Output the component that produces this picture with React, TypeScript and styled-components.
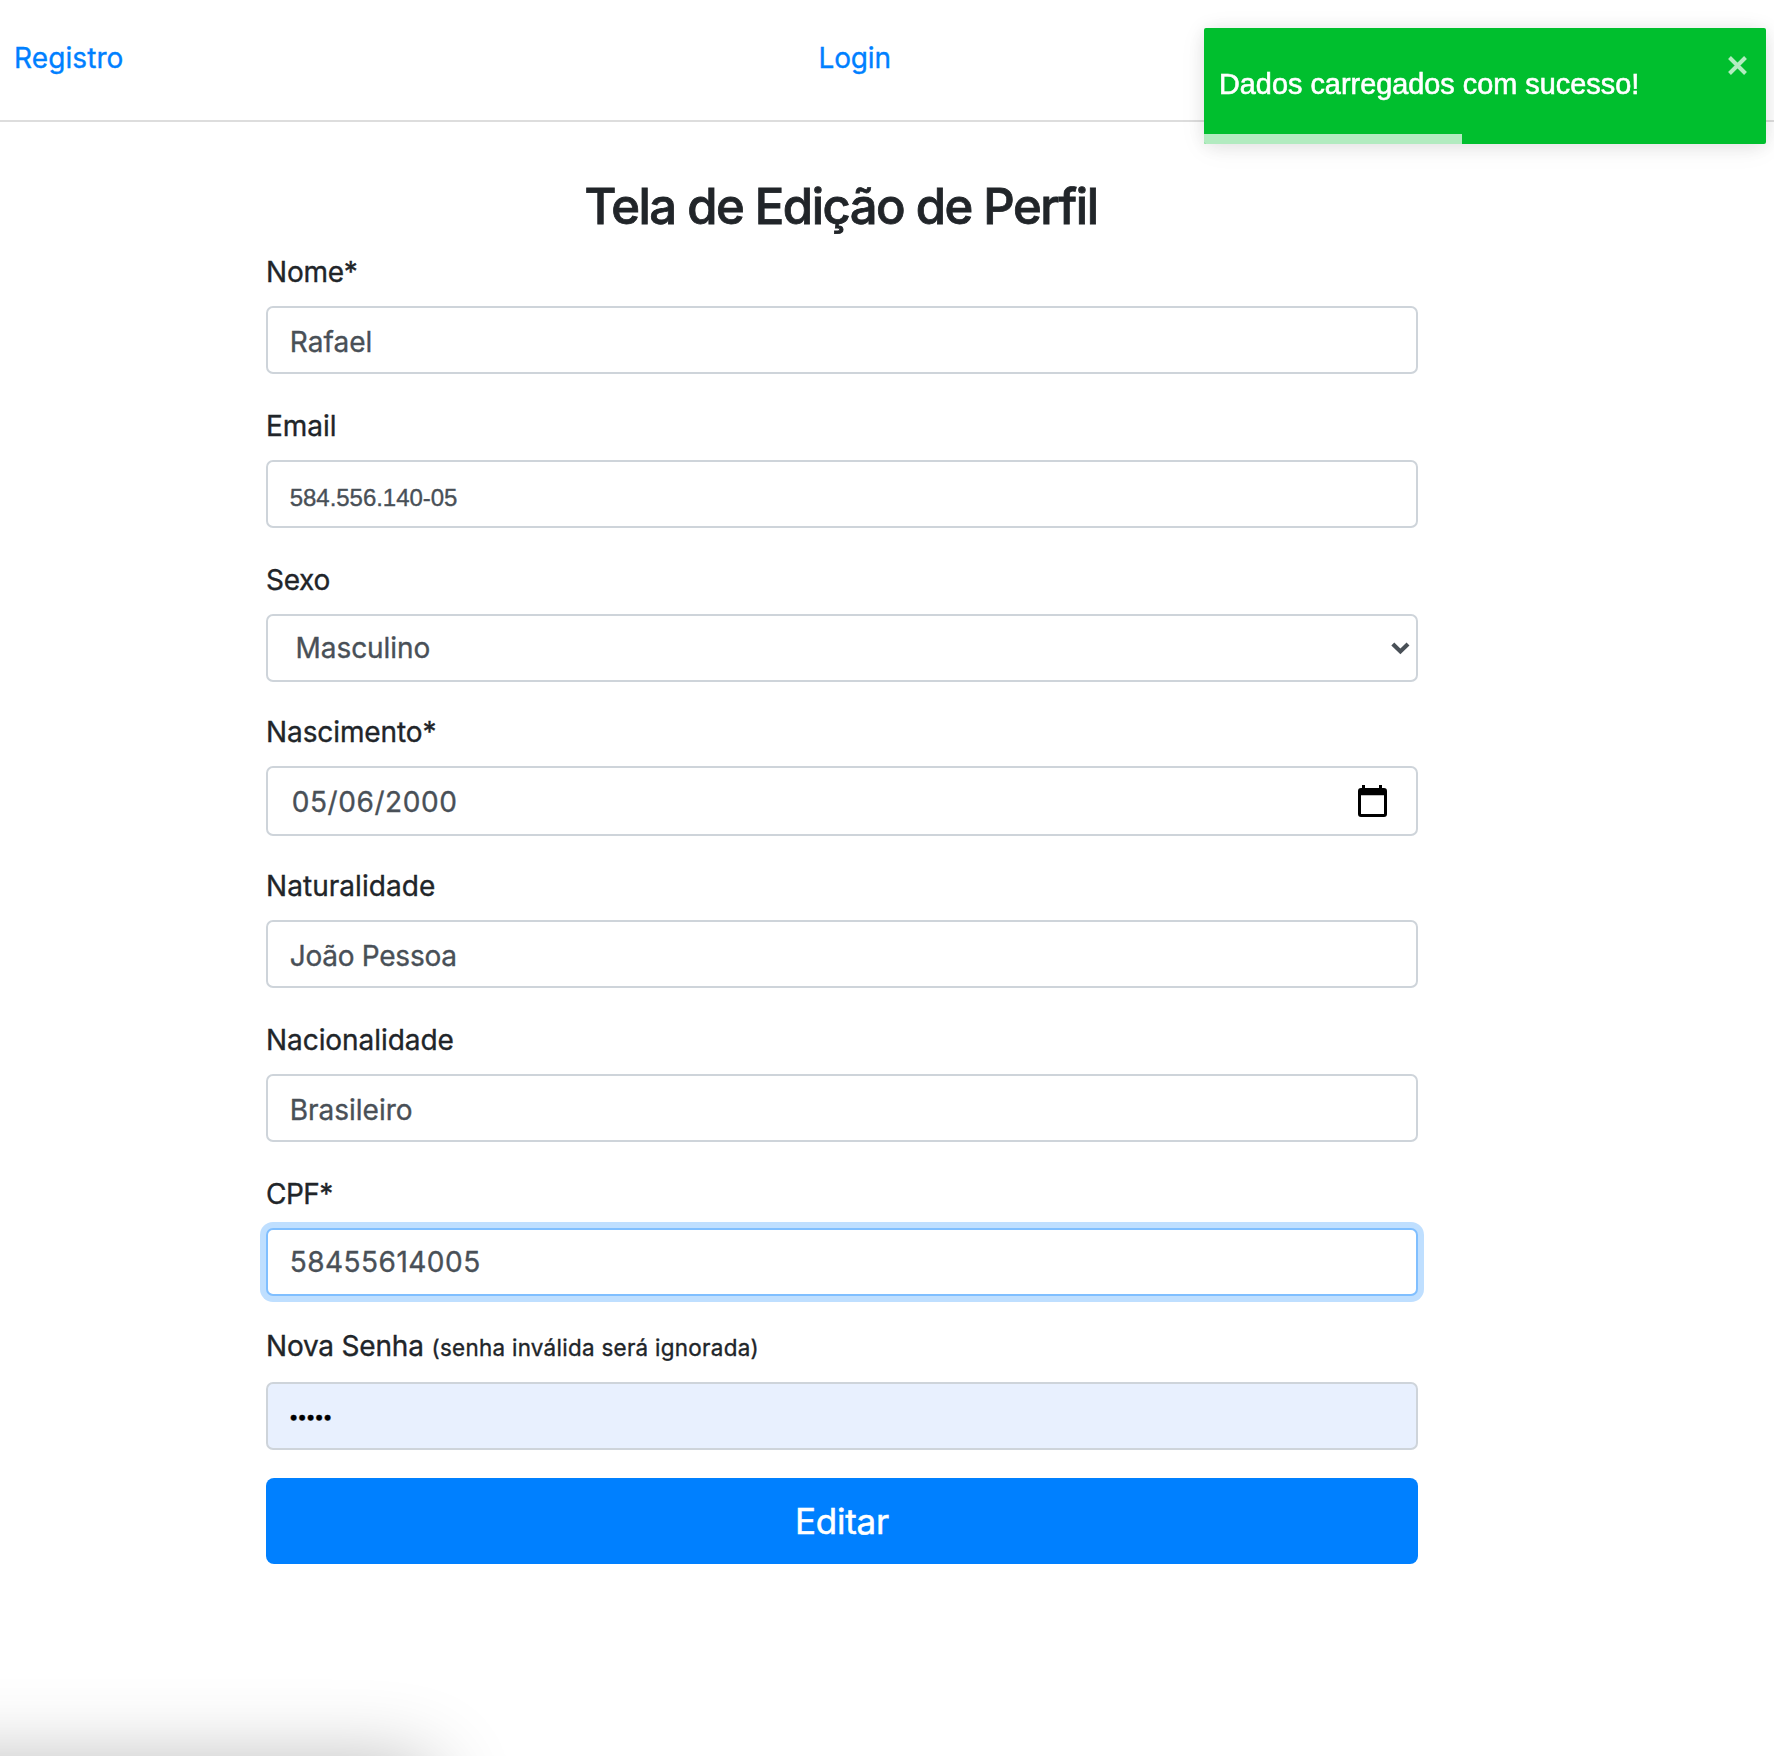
import React from "react";
import styled, { createGlobalStyle } from "styled-components";

const GlobalStyle = createGlobalStyle`
  *, *::before, *::after { box-sizing: border-box; }
  html, body { margin: 0; padding: 0; background: #fff; }
  body {
    font-family: Inter, "Noto Sans", sans-serif;
    font-size: 28px;
    line-height: 42px;
    color: #212529;
    overflow: hidden;
    -webkit-text-stroke: 0.35px currentColor;
  }
`;

const Page = styled.div`
  min-height: 1756px;
  display: flex;
  flex-direction: column;
  align-items: stretch;
`;

const Header = styled.header`
  display: grid;
  grid-template-columns: 804.5px 1fr;
  height: 122px;
  padding: 37px 14px 0;
  border-bottom: 2px solid #dddddd;
`;

const NavLink = styled.a<{ $spacing?: number }>`
  justify-self: start;
  height: 42px;
  color: #0080ff;
  text-decoration: none;
  letter-spacing: ${(p) => p.$spacing ?? 0}px;
`;

const Form = styled.form`
  width: 1152px;
  margin: 55px 0 0 266px;
  display: flex;
  flex-direction: column;
`;

const Title = styled.h2`
  margin: 0 0 15px;
  padding-right: 2px;
  text-align: center;
  font-size: 49px;
  font-weight: 500;
  line-height: 59px;
  letter-spacing: -1.5px;
  -webkit-text-stroke: 0.8px currentColor;
`;

const Group = styled.div<{ $gap: number }>`
  display: flex;
  flex-direction: column;
  margin-bottom: ${(p) => p.$gap}px;
`;

const Label = styled.label<{ $spacing: number; $space: number }>`
  height: 42px;
  margin-bottom: ${(p) => p.$space}px;
  letter-spacing: ${(p) => p.$spacing}px;
  white-space: pre;
`;

const Hint = styled.small`
  font-size: 22.4px;
  letter-spacing: 0.3px;
`;

const Control = styled.div<{
  $height: number;
  $left: number;
  $drop: number;
  $focused?: boolean;
  $filled?: boolean;
}>`
  display: flex;
  align-items: center;
  justify-content: space-between;
  height: ${(p) => p.$height}px;
  padding: ${(p) => p.$drop * 2}px 6px 0 ${(p) => p.$left}px;
  color: ${(p) => (p.$filled ? "#000" : "#495057")};
  background: ${(p) => (p.$filled ? "#e8f0fe" : "#fff")};
  border: 2px solid ${(p) => (p.$focused ? "#80bfff" : "#ced4da")};
  border-radius: 7px;
  box-shadow: ${(p) => (p.$focused ? "0 0 0 6px #bfdfff" : "none")};
`;

const Value = styled.span<{ $spacing: number; $kind?: "small" | "dots" }>`
  letter-spacing: ${(p) => p.$spacing}px;
  font-family: ${(p) => (p.$kind === "small" ? '"Liberation Sans", Arial, sans-serif' : "inherit")};
  font-size: ${(p) => (p.$kind === "small" ? 24 : p.$kind === "dots" ? 18.2 : 28)}px;
`;

const ChevronIcon = styled.svg`
  width: 19px;
  height: 13px;
  flex: none;
`;

const CalendarIcon = styled.svg`
  width: 29px;
  height: 32px;
  flex: none;
  margin: -2px 23.5px 0 0;
`;

const Submit = styled.button`
  height: 86px;
  border: 0;
  border-radius: 8px;
  background: #0080ff;
  color: #fff;
  font: 400 35px/52px Inter, "Noto Sans", sans-serif;
  letter-spacing: -0.24px;
  -webkit-text-stroke: 0.5px currentColor;
`;

const Toast = styled.div`
  position: fixed;
  top: 28px;
  right: 8px;
  width: 562px;
  height: 116px;
  display: flex;
  flex-direction: column;
  justify-content: space-between;
  overflow: hidden;
  border-radius: 2px;
  background: #00bf2e;
  color: #fff;
  box-shadow: 0 2px 20px rgba(0, 0, 0, 0.1), 0 4px 30px rgba(0, 0, 0, 0.05);
`;

const ToastBody = styled.div`
  display: flex;
  justify-content: space-between;
  padding: 35px 19px 0 15px;
`;

const ToastText = styled.span`
  font-family: "Liberation Sans", Arial, sans-serif;
  font-size: 28.8px;
  line-height: 42px;
  letter-spacing: 0.03px;
  -webkit-text-stroke: 0.6px currentColor;
`;

const CloseIcon = styled.svg`
  width: 19px;
  height: 19px;
  margin-top: -7px;
  flex: none;
`;

const Progress = styled.div`
  width: 258px;
  height: 10px;
  background: #b2ebc0;
`;

const CornerShade = styled.div`
  position: fixed;
  left: -200px;
  top: 1765px;
  width: 632px;
  height: 300px;
  border-radius: 20px;
  box-shadow: 0 0 82px rgba(0, 0, 0, 0.3);
`;

type Field = {
  label: string;
  labelSpacing: number;
  hint?: string;
  value: string;
  spacing: number;
  left?: number;
  drop?: number;
  height?: number;
  space?: number;
  gap: number;
  kind?: "small" | "dots";
  icon?: "chevron" | "calendar";
  focused?: boolean;
  filled?: boolean;
};

const fields: Field[] = [
  { label: "Nome*", labelSpacing: -0.22, value: "Rafael", spacing: 0.06, drop: 2, gap: 31 },
  { label: "Email", labelSpacing: 0, value: "584.556.140-05", spacing: -0.03, drop: 4, gap: 31, kind: "small" },
  { label: "Sexo", labelSpacing: -0.3, value: "Masculino", spacing: -0.08, left: 27.6, gap: 29, icon: "chevron" },
  { label: "Nascimento*", labelSpacing: -0.09, value: "05/06/2000", spacing: 0.58, left: 23.7, drop: 1, height: 70, gap: 29, icon: "calendar" },
  { label: "Naturalidade", labelSpacing: 0.05, value: "João Pessoa", spacing: -0.26, drop: 2, gap: 31 },
  { label: "Nacionalidade", labelSpacing: -0.06, value: "Brasileiro", spacing: 0, drop: 2, gap: 31 },
  { label: "CPF*", labelSpacing: -0.5, value: "58455614005", spacing: 0.48, gap: 29, focused: true },
  { label: "Nova Senha ", labelSpacing: -0.19, hint: "(senha inválida será ignorada)", value: "•••••", spacing: -1.75, left: 20.6, drop: 0, space: 15, gap: 28, kind: "dots", filled: true },
];

function FormField({ field }: { field: Field }) {
  return (
    <Group $gap={field.gap}>
      <Label $spacing={field.labelSpacing} $space={field.space ?? 13}>
        {field.label}
        {field.hint && <Hint>{field.hint}</Hint>}
      </Label>
      <Control
        $height={field.height ?? 68}
        $left={field.left ?? 21.7}
        $drop={field.drop ?? 0}
        $focused={field.focused}
        $filled={field.filled}
      >
        <Value $spacing={field.spacing} $kind={field.kind}>{field.value}</Value>
        {field.icon === "chevron" && (
          <ChevronIcon viewBox="0 0 19 13">
            <path d="M1.8 1.9 9.4 9.4 17 1.9" fill="none" stroke="#495057" strokeWidth="4.2" />
          </ChevronIcon>
        )}
        {field.icon === "calendar" && (
          <CalendarIcon viewBox="0 0 29 32">
            <path
              fillRule="evenodd"
              d="M4 0H7V3H21V0H24V3H26A3 3 0 0 1 29 6V29A3 3 0 0 1 26 32H3A3 3 0 0 1 0 29V6A3 3 0 0 1 3 3H4ZM3 10.3V29H26V10.3Z"
              fill="#000"
            />
          </CalendarIcon>
        )}
      </Control>
    </Group>
  );
}

export default function App() {
  return (
    <>
      <GlobalStyle />
      <Page>
        <Header>
          <NavLink $spacing={0.1}>Registro</NavLink>
          <NavLink $spacing={-0.15}>Login</NavLink>
        </Header>
        <Form>
          <Title>Tela de Edição de Perfil</Title>
          {fields.map((field) => (
            <FormField key={field.label} field={field} />
          ))}
          <Submit type="button">Editar</Submit>
        </Form>
      </Page>
      <CornerShade />
      <Toast>
        <ToastBody>
          <ToastText>Dados carregados com sucesso!</ToastText>
          <CloseIcon viewBox="0 0 19 19">
            <path d="M1.5 1.5 17.5 17.5M17.5 1.5 1.5 17.5" stroke="#fff" strokeOpacity="0.7" strokeWidth="4" fill="none" />
          </CloseIcon>
        </ToastBody>
        <Progress />
      </Toast>
    </>
  );
}
